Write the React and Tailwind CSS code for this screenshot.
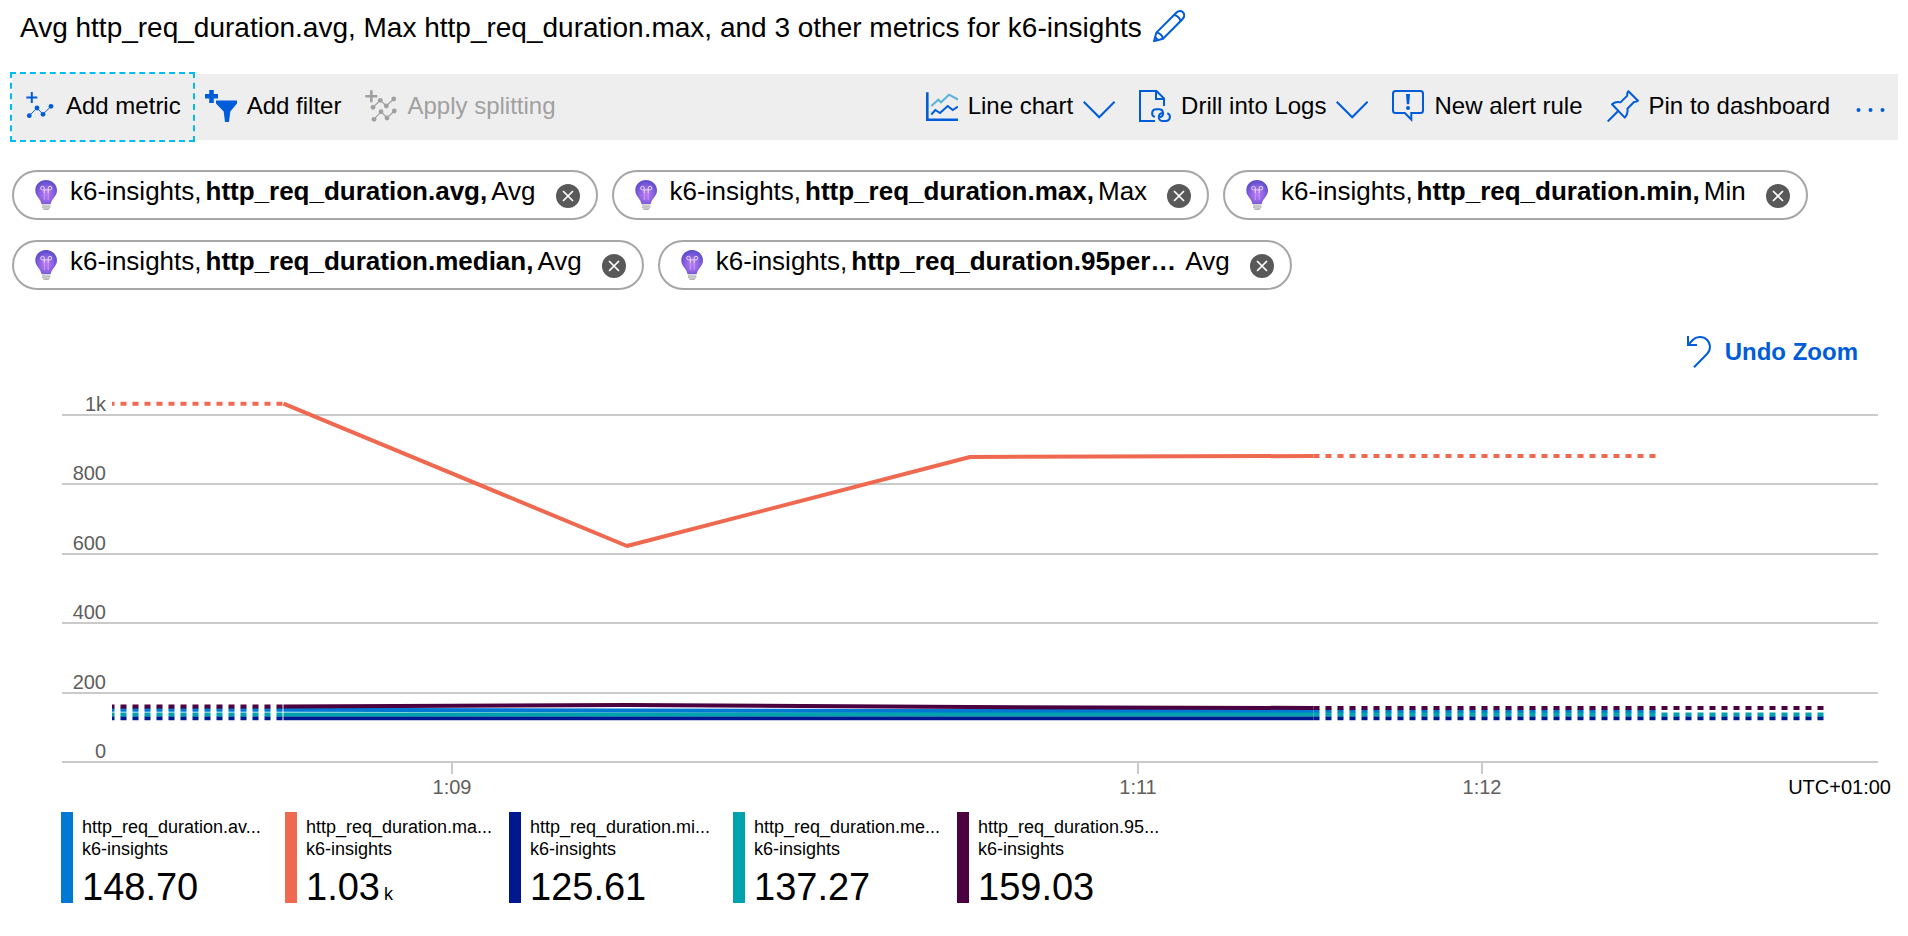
import React from "react";

const BLUE = "#015cda";

function Icon({ children, className = "h-8 w-8", viewBox = "0 0 32 32" }) {
  return (
    <svg viewBox={viewBox} className={`${className} shrink-0`} fill="none" aria-hidden="true">
      {children}
    </svg>
  );
}

const PencilIcon = () => (
  <Icon>
    <g stroke={BLUE} strokeWidth="2" strokeLinejoin="round">
      <path d="M1 31.2L3.4 22.6L23 3C25.2 .6 28.2 .6 30 2.3C31.7 4.2 31.5 7 29.4 9.2L10 28.8L1 31.2Z" />
      <path d="M3.4 22.6C6.5 22.8 9.5 25.5 10 28.8" />
      <path d="M21 5C24 5.3 27 8 27.6 11" />
      <path d="M2.5 27.5L4.8 30" />
    </g>
  </Icon>
);

const AddMetricIcon = () => (
  <Icon>
    <path d="M7.8 2V13M2.3 7.5H13.3" stroke={BLUE} strokeWidth="2" />
    <path d="M5.3 25.7L13 18L19 24.3L27 16.3" stroke={BLUE} strokeWidth="1" />
    <g fill={BLUE}>
      <circle cx="5.3" cy="25.7" r="2.4" />
      <circle cx="13" cy="18" r="2.4" />
      <circle cx="19" cy="24.3" r="2.4" />
      <circle cx="27" cy="16.3" r="2.4" />
    </g>
  </Icon>
);

const AddFilterIcon = () => (
  <Icon>
    <path d="M6.5 0V13M0 6.2H13" stroke={BLUE} strokeWidth="4.6" />
    <path d="M11 10.6H32V13.4L25.3 21.5L24 32H20L18.7 21.5L11 13.4Z" fill={BLUE} />
  </Icon>
);

const SplitIcon = () => (
  <Icon>
    <path d="M6.3 .3V12.3M.3 6.3H12.3" stroke="#a0a0a0" strokeWidth="2.6" />
    <path
      d="M8 17.3L15.3 10.3L21.3 16L28.7 9M9 29.3L16 21.7L22 28L29.3 21"
      stroke="#a0a0a0"
      strokeWidth="1.2"
    />
    <g fill="#a0a0a0">
      <circle cx="8" cy="17.3" r="2.4" />
      <circle cx="15.3" cy="10.3" r="2.4" />
      <circle cx="21.3" cy="16" r="2.4" />
      <circle cx="28.7" cy="9" r="2.4" />
      <circle cx="9" cy="29.3" r="2.4" />
      <circle cx="16" cy="21.7" r="2.4" />
      <circle cx="22" cy="28" r="2.4" />
      <circle cx="29.3" cy="21" r="2.4" />
    </g>
  </Icon>
);

const LineChartIcon = () => (
  <Icon>
    <path d="M1.3 2.2V29.7H32" stroke={BLUE} strokeWidth="2.6" />
    <path d="M5.3 16L12.3 9.7L15 12.3L23 4.7L32 9.5" stroke="#59b4d9" strokeWidth="2" />
    <path d="M5.3 24.5L9.3 20L14 23L21.7 16L26.7 20L32 16.5" stroke={BLUE} strokeWidth="2" />
  </Icon>
);

const ChevronIcon = () => (
  <Icon>
    <path d="M.7 11.7L16.2 27.2L31.6 11.7" stroke={BLUE} strokeWidth="2.1" />
  </Icon>
);

const LogsIcon = () => (
  <Icon>
    <g stroke={BLUE} strokeWidth="2">
      <path d="M16 31H1V1H17.5L25 8.5V16" />
      <path d="M17 1V9H25" />
      <path d="M15.8 27C11.8 25.5 12.3 19.3 17.3 19.3H20C25 19.3 25.5 26 21 27.2" />
      <path d="M28.3 23.3C32.2 24.8 31.8 31 26.8 31H24C18.8 31 18.5 24.3 23 23" />
    </g>
  </Icon>
);

const AlertIcon = () => (
  <Icon>
    <path
      d="M3.5 1H28.5Q31 1 31 3.5V20.5Q31 23 28.5 23H19.3V29.5L12.8 23H3.5Q1 23 1 20.5V3.5Q1 1 3.5 1Z"
      stroke={BLUE}
      strokeWidth="2"
    />
    <path d="M14 4H18L17.2 14.3H14.8Z" fill={BLUE} />
    <circle cx="16" cy="18" r="2" fill={BLUE} />
  </Icon>
);

const PinIcon = () => (
  <Icon>
    <g stroke={BLUE} strokeWidth="2" strokeLinejoin="round">
      <path d="M21.4 1.2L31 10.8C29.5 12 28.2 12 27 12L20.4 18.7C21 21.5 20.5 24.5 17.8 27.6L5 14.3C7.5 12.3 10.5 11.7 13.5 12.4L20.3 5.6C20 4 20.3 2.5 21.4 1.2Z" />
      <path d="M11.4 20.8L.7 31.5" />
    </g>
  </Icon>
);

const MoreIcon = () => (
  <Icon>
    <g fill={BLUE}>
      <circle cx="4.5" cy="20" r="2" />
      <circle cx="16.5" cy="20" r="2" />
      <circle cx="28.5" cy="20" r="2" />
    </g>
  </Icon>
);

const UndoIcon = () => (
  <Icon className="h-8 w-6" viewBox="0 0 24 32">
    <path d="M1 0V9H10" stroke={BLUE} strokeWidth="2" />
    <path
      d="M1.5 8.5L5.5 4.2C9 .4 15.5 -.3 19.7 3.5C24 7.5 24 14 20 18L7 31.2"
      stroke={BLUE}
      strokeWidth="2"
    />
  </Icon>
);

const BulbIcon = () => (
  <Icon>
    <defs>
      <radialGradient id="bulb" cx="0.5" cy="0.6" r="0.55">
        <stop offset="0" stopColor="#b87af5" />
        <stop offset="0.5" stopColor="#9566e4" />
        <stop offset="1" stopColor="#5f4fce" />
      </radialGradient>
    </defs>
    <path
      d="M16 1C10 1 5.3 5.6 5.3 11.3C5.3 17.5 10.5 19.5 11.5 25H20.7C21.7 19.5 27 17.5 27 11.3C27 5.6 22 1 16 1Z"
      fill="url(#bulb)"
    />
    <path d="M14.3 21V12.2M18.2 21V12.2" stroke="#c79cf8" strokeWidth="1" />
    <path
      d="M14.3 14V9.1A1.8 1.8 0 1 0 12.5 10.9H20A1.8 1.8 0 1 0 18.2 9.1V14"
      stroke="#eadcff"
      strokeWidth="1"
    />
    <path d="M12 25.5H20.3V28.3L18.5 31H13.8L12 28.3Z" fill="#b3b3b3" />
    <path d="M12 27.2L20.3 26.6M12.6 29.3L19.6 28.7" stroke="#e8e8e8" strokeWidth=".8" />
  </Icon>
);

function ToolButton({ icon, label, trailing, disabled, focused }) {
  return (
    <button
      type="button"
      disabled={disabled}
      className={`flex h-[66px] items-center gap-[10px] px-3 pb-0.5 text-2xl whitespace-nowrap ${
        disabled ? "text-[#a0a0a0]" : "text-black"
      } ${focused ? "outline-2 outline-dashed outline-[#00bcf2]" : ""}`}
    >
      {icon}
      {label}
      {trailing}
    </button>
  );
}

const chips = [
  { metric: "http_req_duration.avg,", agg: "Avg" },
  { metric: "http_req_duration.max,", agg: "Max" },
  { metric: "http_req_duration.min,", agg: "Min" },
  { metric: "http_req_duration.median,", agg: "Avg" },
  { metric: "http_req_duration.95per…", agg: "Avg", cut: true },
];

function Chip({ metric, agg, cut }) {
  return (
    <li className="flex h-[50px] items-center rounded-full border-2 border-[#a6a6a6] px-4">
      <BulbIcon />
      <span className="flex gap-1 pb-2 pl-2 text-[26px] leading-8 whitespace-nowrap">
        <span>k6-insights,</span>
        <b className={cut ? "pr-[5px]" : ""}>{metric}</b>
        <span>{agg}</span>
      </span>
      <button type="button" aria-label={`Remove ${metric}`} className="ml-5 pt-0.5">
        <Icon className="h-6 w-6" viewBox="0 0 24 24">
          <circle cx="12" cy="12" r="12" fill="#595959" />
          <path d="M7 7L17 17M17 7L7 17" stroke="#fff" strokeWidth="1.7" />
        </Icon>
      </button>
    </li>
  );
}

const gridLines = [
  { y: 31, label: "1k" },
  { y: 100, label: "800" },
  { y: 170, label: "600" },
  { y: 239, label: "400" },
  { y: 309, label: "200" },
  { y: 378, label: "0" },
];

const ticks = [
  { x: 452, label: "1:09" },
  { x: 1138, label: "1:11" },
  { x: 1482, label: "1:12" },
];

const series = [
  { color: "#0078d4", y: [325.7, 326.5, 327, 327], end: 1656 },
  { color: "#ef6950", y: [19.7, 162, 73, 72], end: 1656 },
  { color: "#00188f", y: [334.3, 334.3, 334.3, 334.3], end: 1824 },
  { color: "#00a2ad", y: [330.4, 330.4, 330.4, 330.4], end: 1824 },
  { color: "#4b003f", y: [322.4, 321, 323, 324], end: 1824 },
];

function Chart() {
  return (
    <svg viewBox="0 0 1908 420" className="block w-full" fill="none" role="img" aria-label="Metrics line chart">
      {gridLines.map((g) => (
        <g key={g.label}>
          <path d={`M62 ${g.y}H1878`} stroke="#cacaca" strokeWidth="2" />
          <text x="106" y={g.y - 4} textAnchor="end" fontSize="20" fill="#605e5c">
            {g.label}
          </text>
        </g>
      ))}
      {ticks.map((t) => (
        <g key={t.label}>
          <path d={`M${t.x} 379V390`} stroke="#cacaca" strokeWidth="2" />
          <text x={t.x} y="410" textAnchor="middle" fontSize="20" fill="#605e5c">
            {t.label}
          </text>
        </g>
      ))}
      <text x="1891" y="410" textAnchor="end" fontSize="20" fill="#000">
        UTC+01:00
      </text>
      {series.map((s) => (
        <g key={s.color} stroke={s.color} strokeWidth="4">
          <path d={`M112 ${s.y[0]}H284`} strokeDasharray="6 6" strokeDashoffset="3.5" />
          <path
            d={`M283.5 ${s.y[0]}L627 ${s.y[1]}L970 ${s.y[2]}L1313.5 ${s.y[3]}`}
            strokeLinejoin="round"
          />
          <path d={`M1313.5 ${s.y[3]}H${s.end}`} strokeDasharray="6 6" />
        </g>
      ))}
    </svg>
  );
}

const legend = [
  { name: "http_req_duration.av...", value: "148.70", bar: "bg-[#0078d4]" },
  { name: "http_req_duration.ma...", value: "1.03", unit: "k", bar: "bg-[#ef6950]" },
  { name: "http_req_duration.mi...", value: "125.61", bar: "bg-[#00188f]" },
  { name: "http_req_duration.me...", value: "137.27", bar: "bg-[#00a2ad]" },
  { name: "http_req_duration.95...", value: "159.03", bar: "bg-[#4b003f]" },
];

export default function App() {
  return (
    <main className="bg-white pb-8 font-['Liberation_Sans',Arial,sans-serif] text-black">
      <header className="flex items-start gap-[11px] px-5 pt-[10px]">
        <h1 className="h-8 text-[28px] leading-9">
          Avg http_req_duration.avg, Max http_req_duration.max, and 3 other metrics for k6-insights
        </h1>
        <button type="button" aria-label="Edit title">
          <PencilIcon />
        </button>
      </header>

      <nav className="mt-8 mr-[10px] ml-3 flex items-center bg-[#eeeeee]" aria-label="Chart actions">
        <ToolButton icon={<AddMetricIcon />} label="Add metric" focused />
        <ToolButton icon={<AddFilterIcon />} label="Add filter" />
        <ToolButton icon={<SplitIcon />} label="Apply splitting" disabled />
        <div className="ml-auto flex">
          <ToolButton icon={<LineChartIcon />} label="Line chart" trailing={<ChevronIcon />} />
          <ToolButton icon={<LogsIcon />} label="Drill into Logs" trailing={<ChevronIcon />} />
          <ToolButton icon={<AlertIcon />} label="New alert rule" />
          <ToolButton icon={<PinIcon />} label="Pin to dashboard" />
          <button type="button" aria-label="More" className="px-3 pb-0.5">
            <MoreIcon />
          </button>
        </div>
      </nav>

      <ul className="mt-[30px] flex flex-wrap gap-x-[14px] gap-y-5 px-3">
        {chips.map((c) => (
          <Chip key={c.metric} {...c} />
        ))}
      </ul>

      <div className="mt-[46px] flex justify-end pr-[50px]">
        <button type="button" className="flex items-center gap-[14px] text-2xl font-bold text-[#015cda]">
          <UndoIcon />
          Undo Zoom
        </button>
      </div>

      <section className="mt-4">
        <Chart />
      </section>

      <ul className="mt-2 flex flex-wrap pl-[61px]">
        {legend.map((l) => (
          <li key={l.name} className="flex h-[91px] w-56 gap-[9px]">
            <span className={`w-3 ${l.bar}`} />
            <div className="pt-1 whitespace-nowrap">
              <div className="text-lg leading-[22px]">{l.name}</div>
              <div className="text-lg leading-[22px]">k6-insights</div>
              <div className="flex items-baseline gap-1 text-[38px] leading-[54px]">
                {l.value}
                {l.unit && <span className="text-lg leading-[22px]">{l.unit}</span>}
              </div>
            </div>
          </li>
        ))}
      </ul>
    </main>
  );
}
